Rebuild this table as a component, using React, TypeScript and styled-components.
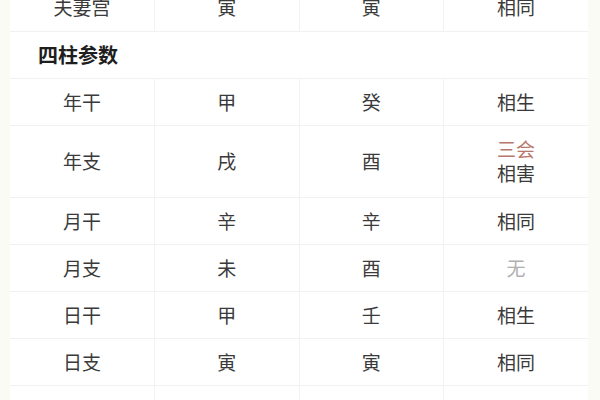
import React from "react";
import styled, { createGlobalStyle } from "styled-components";

type Cell = { text: string; tone?: "red" | "muted" };
type Row = { cells: (string | Cell[])[]; tall?: boolean };

const rows: Row[] = [
	{ cells: ["年干", "甲", "癸", "相生"] },
	{ cells: ["年支", "戌", "酉", [{ text: "三会", tone: "red" }, { text: "相害" }]], tall: true },
	{ cells: ["月干", "辛", "辛", "相同"] },
	{ cells: ["月支", "未", "酉", [{ text: "无", tone: "muted" }]] },
	{ cells: ["日干", "甲", "壬", "相生"] },
	{ cells: ["日支", "寅", "寅", "相同"] },
	{ cells: ["时干", "丙", "甲", "相生"] },
];

export default function App() {
	return (
		<>
			<GlobalStyle />
			<Page>
				<Table>
					<tbody>
						<Tr>
							<Td>夫妻宫</Td>
							<Td>寅</Td>
							<Td>寅</Td>
							<Td>相同</Td>
						</Tr>
						<Tr>
							<Heading colSpan={4}>四柱参数</Heading>
						</Tr>
						{rows.map((row, i) => (
							<Tr key={i} $tall={row.tall}>
								{row.cells.map((c, j) =>
									typeof c === "string" ? (
										<Td key={j}>{c}</Td>
									) : (
										<Td key={j}>
											{c.map((l, k) => (
												<Line key={k} $tone={l.tone}>
													{l.text}
												</Line>
											))}
										</Td>
									)
								)}
							</Tr>
						))}
					</tbody>
				</Table>
			</Page>
		</>
	);
}

const GlobalStyle = createGlobalStyle`
	html, body {
		margin: 0;
		background: #fbfbf6;
		overflow: hidden;
	}
	body {
		font-family: "Noto Sans CJK SC", "Noto Sans", sans-serif;
	}
`;

const Page = styled.div`
	width: 600px;
	height: 400px;
	padding: 0 12px 0 10px;
	box-sizing: border-box;
	overflow: hidden;
`;

const Table = styled.table`
	width: 100%;
	margin-top: -16px;
	border-collapse: collapse;
	table-layout: fixed;
	background: #ffffff;
`;

const Tr = styled.tr<{ $tall?: boolean }>`
	height: ${(p) => (p.$tall ? "72px" : "47px")};
	border-bottom: 1px solid #f1f1f1;
`;

const Td = styled.td`
	border-left: 1px solid #f3f3f3;
	text-align: center;
	vertical-align: middle;
	font-size: 19px;
	line-height: 24px;
	color: #3a3a3a;
	padding: 0;
	&:first-child {
		border-left: none;
	}
`;

const Heading = styled.td`
	padding: 0 0 0 28px;
	font-size: 20px;
	font-weight: 700;
	color: #1e1e1e;
	text-align: left;
	vertical-align: middle;
`;

const Line = styled.div<{ $tone?: "red" | "muted" }>`
	color: ${(p) =>
		p.$tone === "red" ? "#b9786d" : p.$tone === "muted" ? "#b0b0b0" : "#3a3a3a"};
`;
